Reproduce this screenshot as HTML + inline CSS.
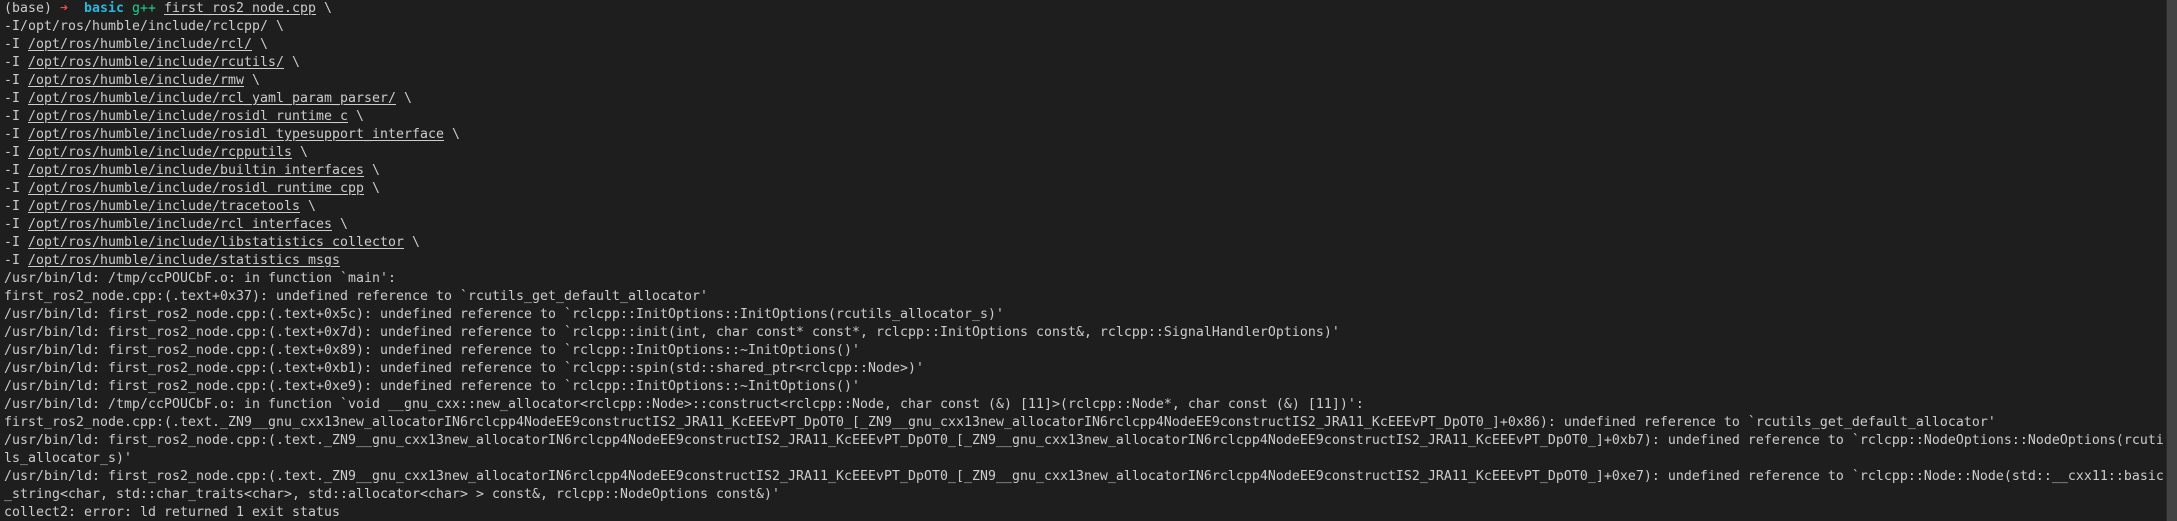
<!DOCTYPE html>
<html><head><meta charset="utf-8"><style>
html,body{margin:0;padding:0;background:#1e1e1e;width:2177px;height:521px;overflow:hidden}
pre{margin:0;padding:0 0 0 4px;font-family:"DejaVu Sans Mono","Liberation Mono",monospace;font-size:13.2px;letter-spacing:0.06px;line-height:18px;color:#cccccc;white-space:pre}
u{text-decoration:underline;text-underline-offset:2px}
.r{color:#f14c4c}.c{color:#29b8db;font-weight:bold}.g{color:#23d18b}
.sb{position:absolute;left:2166px;top:0;width:11px;height:521px;background:#434343;border-left:1px solid #2b2b2b}
</style></head><body>
<pre>(base) <span class="r">➜</span>  <span class="c">basic</span> <span class="g">g++</span> <u>first_ros2_node.cpp</u> \
-I/opt/ros/humble/include/rclcpp/ \
-I <u>/opt/ros/humble/include/rcl/</u> \
-I <u>/opt/ros/humble/include/rcutils/</u> \
-I <u>/opt/ros/humble/include/rmw</u> \
-I <u>/opt/ros/humble/include/rcl_yaml_param_parser/</u> \
-I <u>/opt/ros/humble/include/rosidl_runtime_c</u> \
-I <u>/opt/ros/humble/include/rosidl_typesupport_interface</u> \
-I <u>/opt/ros/humble/include/rcpputils</u> \
-I <u>/opt/ros/humble/include/builtin_interfaces</u> \
-I <u>/opt/ros/humble/include/rosidl_runtime_cpp</u> \
-I <u>/opt/ros/humble/include/tracetools</u> \
-I <u>/opt/ros/humble/include/rcl_interfaces</u> \
-I <u>/opt/ros/humble/include/libstatistics_collector</u> \
-I <u>/opt/ros/humble/include/statistics_msgs</u>
/usr/bin/ld: /tmp/ccPOUCbF.o: in function `main':
first_ros2_node.cpp:(.text+0x37): undefined reference to `rcutils_get_default_allocator'
/usr/bin/ld: first_ros2_node.cpp:(.text+0x5c): undefined reference to `rclcpp::InitOptions::InitOptions(rcutils_allocator_s)'
/usr/bin/ld: first_ros2_node.cpp:(.text+0x7d): undefined reference to `rclcpp::init(int, char const* const*, rclcpp::InitOptions const&amp;, rclcpp::SignalHandlerOptions)'
/usr/bin/ld: first_ros2_node.cpp:(.text+0x89): undefined reference to `rclcpp::InitOptions::~InitOptions()'
/usr/bin/ld: first_ros2_node.cpp:(.text+0xb1): undefined reference to `rclcpp::spin(std::shared_ptr&lt;rclcpp::Node&gt;)'
/usr/bin/ld: first_ros2_node.cpp:(.text+0xe9): undefined reference to `rclcpp::InitOptions::~InitOptions()'
/usr/bin/ld: /tmp/ccPOUCbF.o: in function `void __gnu_cxx::new_allocator&lt;rclcpp::Node&gt;::construct&lt;rclcpp::Node, char const (&amp;) [11]&gt;(rclcpp::Node*, char const (&amp;) [11])':
first_ros2_node.cpp:(.text._ZN9__gnu_cxx13new_allocatorIN6rclcpp4NodeEE9constructIS2_JRA11_KcEEEvPT_DpOT0_[_ZN9__gnu_cxx13new_allocatorIN6rclcpp4NodeEE9constructIS2_JRA11_KcEEEvPT_DpOT0_]+0x86): undefined reference to `rcutils_get_default_allocator'
/usr/bin/ld: first_ros2_node.cpp:(.text._ZN9__gnu_cxx13new_allocatorIN6rclcpp4NodeEE9constructIS2_JRA11_KcEEEvPT_DpOT0_[_ZN9__gnu_cxx13new_allocatorIN6rclcpp4NodeEE9constructIS2_JRA11_KcEEEvPT_DpOT0_]+0xb7): undefined reference to `rclcpp::NodeOptions::NodeOptions(rcuti
ls_allocator_s)'
/usr/bin/ld: first_ros2_node.cpp:(.text._ZN9__gnu_cxx13new_allocatorIN6rclcpp4NodeEE9constructIS2_JRA11_KcEEEvPT_DpOT0_[_ZN9__gnu_cxx13new_allocatorIN6rclcpp4NodeEE9constructIS2_JRA11_KcEEEvPT_DpOT0_]+0xe7): undefined reference to `rclcpp::Node::Node(std::__cxx11::basic
_string&lt;char, std::char_traits&lt;char&gt;, std::allocator&lt;char&gt; &gt; const&amp;, rclcpp::NodeOptions const&amp;)'
collect2: error: ld returned 1 exit status</pre>
<div class="sb"></div>
</body></html>
